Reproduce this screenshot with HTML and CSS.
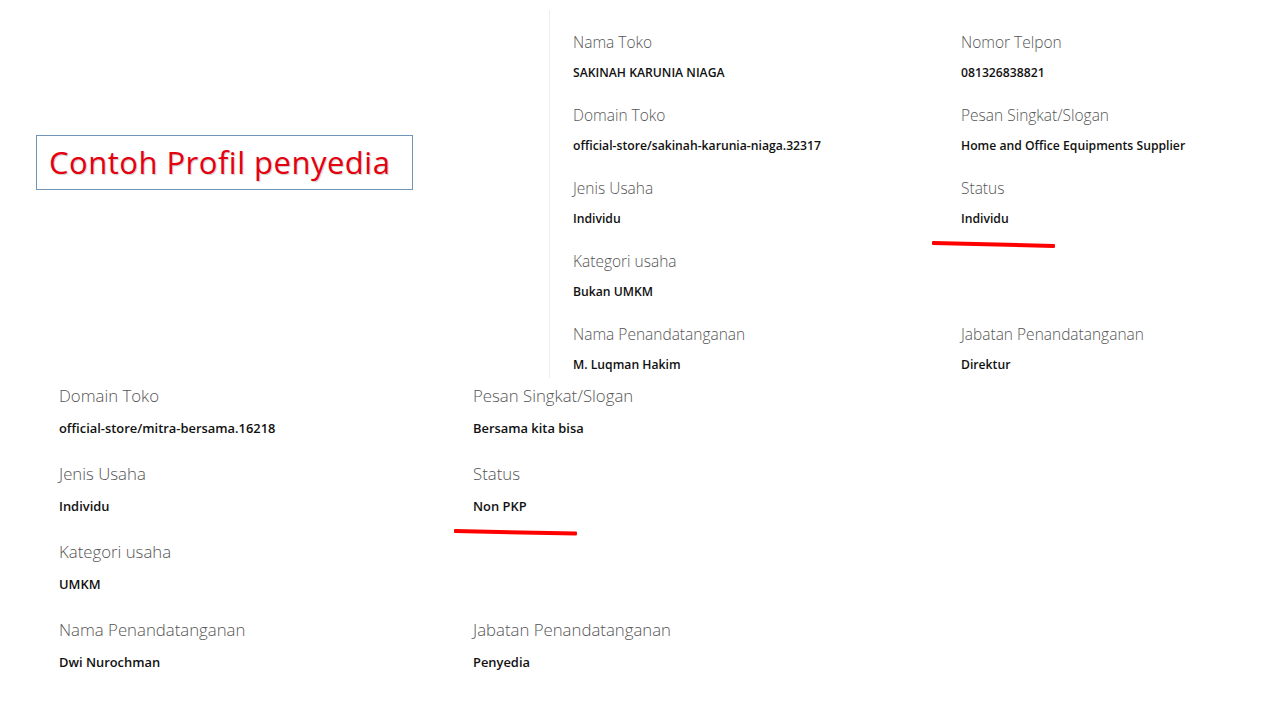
FILE: index.html
```html
<!DOCTYPE html>
<html lang="en">
	<head>
		<title>Contoh Profil penyedia</title>
		<meta charset="utf-8">
		<link rel="stylesheet" href="styles.css">
	</head>
	<body>
		<div class="top">
			<div class="intro">
				<div class="title">Contoh Profil penyedia</div>
			</div>
			<div class="shot">
				<div class="item"><div class="lbl">Nama Toko</div><div class="val">SAKINAH KARUNIA NIAGA</div></div>
				<div class="item"><div class="lbl">Nomor Telpon</div><div class="val">081326838821</div></div>
				<div class="item"><div class="lbl">Domain Toko</div><div class="val">official-store/sakinah-karunia-niaga.32317</div></div>
				<div class="item"><div class="lbl">Pesan Singkat/Slogan</div><div class="val">Home and Office Equipments Supplier</div></div>
				<div class="item"><div class="lbl">Jenis Usaha</div><div class="val">Individu</div></div>
				<div class="item"><div class="lbl">Status</div><div class="val">Individu</div></div>
				<div class="item"><div class="lbl">Kategori usaha</div><div class="val">Bukan UMKM</div></div>
				<div class="item"></div>
				<div class="item"><div class="lbl">Nama Penandatanganan</div><div class="val">M. Luqman Hakim</div></div>
				<div class="item"><div class="lbl">Jabatan Penandatanganan</div><div class="val">Direktur</div></div>
			</div>
		</div>
		<div class="shot2">
			<div class="item"><div class="lbl">Domain Toko</div><div class="val">official-store/mitra-bersama.16218</div></div>
			<div class="item"><div class="lbl">Pesan Singkat/Slogan</div><div class="val">Bersama kita bisa</div></div>
			<div class="item"><div class="lbl">Jenis Usaha</div><div class="val">Individu</div></div>
			<div class="item"><div class="lbl">Status</div><div class="val">Non PKP</div></div>
			<div class="item"><div class="lbl">Kategori usaha</div><div class="val">UMKM</div></div>
			<div class="item"></div>
			<div class="item"><div class="lbl">Nama Penandatanganan</div><div class="val">Dwi Nurochman</div></div>
			<div class="item"><div class="lbl">Jabatan Penandatanganan</div><div class="val">Penyedia</div></div>
		</div>
		<div class="mark mark1"></div>
		<div class="mark mark2"></div>
	</body>
</html>
```

FILE: styles.css
```css
html, body {
	margin: 0;
	background-color: #fff;
	font-family: 'Open Sans', 'Noto Sans', sans-serif;
}
body {
	position: relative;
	width: 1280px;
	height: 720px;
	overflow: hidden;
}
.top {
	display: flex;
	padding-top: 10px;
}
.intro {
	width: 549px;
	padding: 125px 0 0 36px;
	box-sizing: border-box;
}
.title {
	display: inline-block;
	width: 377px;
	height: 55px;
	box-sizing: border-box;
	border: 1px solid #6f95b8;
	padding-left: 12px;
	font-size: 31px;
	line-height: 52px;
	letter-spacing: 0.5px;
	color: #e50010;
	text-shadow: 1px 1px 1px rgba(0, 0, 0, 0.2);
	white-space: nowrap;
}
.shot {
	width: 690px;
	border-left: 1px solid #eee;
	padding: 22px 0 3px 23px;
	display: grid;
	grid-template-columns: 388px 1fr;
	row-gap: 22px;
}
.lbl {
	color: #555;
	font-weight: 300;
	font-size: 15.5px;
	line-height: 20px;
	white-space: nowrap;
}
.val {
	margin-top: 11px;
	color: #111;
	font-weight: 600;
	font-size: 12.2px;
	line-height: 20px;
	white-space: nowrap;
}
.item {
	min-height: 51px;
}
.shot2 {
	padding: 7px 0 0 59px;
	display: grid;
	grid-template-columns: 414px 414px;
	row-gap: 23px;
}
.shot2 .lbl {
	font-size: 16.8px;
	line-height: 22px;
}
.shot2 .val {
	margin-top: 10px;
	font-size: 12.9px;
	line-height: 22px;
}
.shot2 .item {
	min-height: 55px;
}
.mark {
	position: absolute;
	height: 4px;
	background: #f00;
	border-radius: 1px;
	transform-origin: left center;
}
.mark1 {
	left: 932px;
	top: 241px;
	width: 123px;
	transform: rotate(1.4deg);
}
.mark2 {
	left: 454px;
	top: 529px;
	width: 123px;
	transform: rotate(1.2deg);
}
```
